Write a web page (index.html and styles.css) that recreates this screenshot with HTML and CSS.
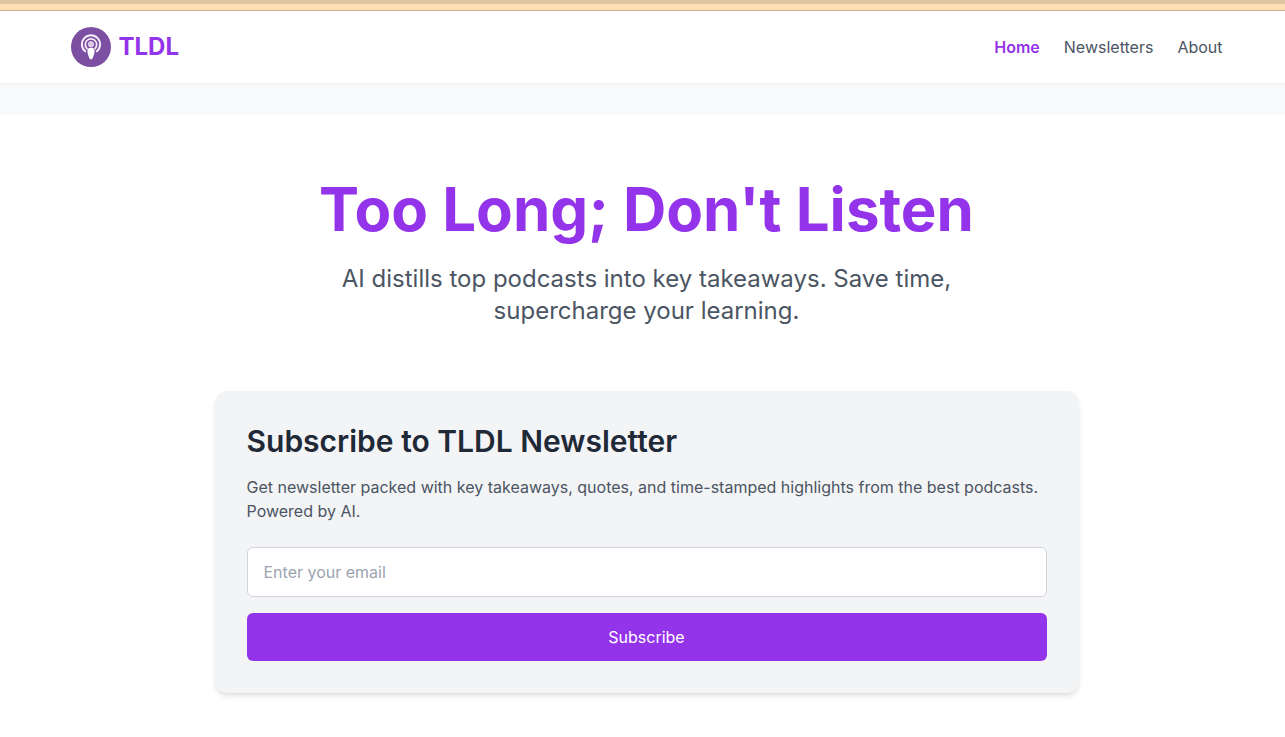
FILE: index.html
```html
<!DOCTYPE html>
<html lang="en">
<head>
<meta charset="utf-8">
<meta name="viewport" content="width=device-width, initial-scale=1">
<title>TLDL</title>
<link rel="stylesheet" href="styles.css">
</head>
<body>
<div class="top-strip"></div>
<header class="site-header">
  <div class="header-inner">
    <a class="brand" href="#">
      <svg class="brand-logo" viewBox="0 0 40 40" aria-hidden="true">
        <circle cx="20" cy="20" r="20" fill="#7d4fa3"/>
        <g fill="none" stroke="#f6effa" stroke-linecap="round">
          <path d="M14.200 24.300A9.100 9.100 0 1 1 25.800 24.300" stroke-width="1.900"/>
          <path d="M16 21.600A5.700 5.700 0 1 1 24 21.600" stroke-width="1.700"/>
        </g>
        <circle cx="20" cy="17.200" r="2.700" fill="#d9c6e6" stroke="#f6effa" stroke-width=".6"/>
        <path d="M20 20.800c2.600 0 3.800 1.200 3.600 3.400-.2 2.400-.9 4.400-1.700 6.200-.5 1.200-1 1.900-1.900 1.900s-1.400-.7-1.900-1.900c-.8-1.800-1.500-3.800-1.700-6.200-.2-2.200 1-3.400 3.600-3.400z" fill="#fff"/>
      </svg>
      <span class="brand-name">TLDL</span>
    </a>
    <nav class="site-nav">
      <a class="nav-link nav-link-active" href="#">Home</a>
      <a class="nav-link" href="#">Newsletters</a>
      <a class="nav-link" href="#">About</a>
    </nav>
  </div>
</header>
<main class="hero">
  <h1 class="hero-title">Too Long; Don't Listen</h1>
  <p class="hero-text">AI distills top podcasts into key takeaways. Save time, supercharge your learning.</p>
  <section class="card">
    <h2 class="card-title">Subscribe to TLDL Newsletter</h2>
    <p class="card-text">Get newsletter packed with key takeaways, quotes, and time-stamped highlights from the best podcasts. Powered by AI.</p>
    <form class="signup">
      <input class="email" type="email" aria-label="Email" placeholder="Enter your email">
      <button class="submit" type="submit">Subscribe</button>
    </form>
  </section>
</main>
</body>
</html>
```
FILE: styles.css
```css
* {
  box-sizing: border-box;
  margin: 0;
}
body {
  background: #fff;
  color: #4b5563;
  font-family: Inter, "Liberation Sans", sans-serif;
  font-size: 16px;
  line-height: 24px;
}
a {
  color: inherit;
  text-decoration: none;
}
.top-strip {
  height: 11px;
  background: #ffdeb5;
  border-top: 4px solid #dfc4a0;
  border-bottom: 1px solid #cdb08c;
}
.site-header {
  position: relative;
  padding: 16px 0 16px 8px;
  background: #fff;
  box-shadow: 0 1px 2px rgb(0 0 0 / 5%);
}
.header-inner {
  display: flex;
  align-items: center;
  justify-content: space-between;
  max-width: 1152px;
  margin: 0 auto;
}
.brand {
  display: flex;
  align-items: center;
  gap: 8px;
}
.brand-logo {
  width: 40px;
  height: 40px;
}
.brand-name {
  color: #9333ea;
  font-size: 24px;
  font-weight: 700;
  line-height: 32px;
}
.site-nav {
  display: flex;
  gap: 24px;
}
.nav-link-active {
  color: #9333ea;
  font-weight: 600;
}
.hero {
  padding: 64px 16px 44px 24px;
  border-top: 32px solid #f9fafb;
  text-align: center;
}
.hero-title {
  margin-bottom: 24px;
  color: #9333ea;
  font-size: 60px;
  font-weight: 700;
  line-height: 60px;
}
.hero-text {
  max-width: 672px;
  margin: 0 auto 64px;
  font-size: 24px;
  line-height: 32px;
}
.card {
  max-width: 864px;
  margin: 0 auto;
  padding: 32px;
  border-radius: 12px;
  background: #f3f4f6;
  box-shadow: 0 4px 6px -1px rgb(0 0 0 / 10%), 0 2px 4px -2px rgb(0 0 0 / 10%);
  text-align: left;
}
.card-title {
  margin-bottom: 16px;
  color: #1f2937;
  font-size: 30px;
  font-weight: 600;
  line-height: 36px;
}
.card-text {
  margin-bottom: 24px;
}
.signup {
  display: grid;
  gap: 16px;
}
.email,
.submit {
  width: 100%;
  padding: 12px 16px;
  border-radius: 6px;
  font: inherit;
}
.email {
  height: 50px;
  border: 1px solid #d1d5db;
  background: #fff;
  color: #1f2937;
}
.email::placeholder {
  color: #9ca3af;
}
.submit {
  border: 0;
  background: #9333ea;
  color: #fff;
}
```
